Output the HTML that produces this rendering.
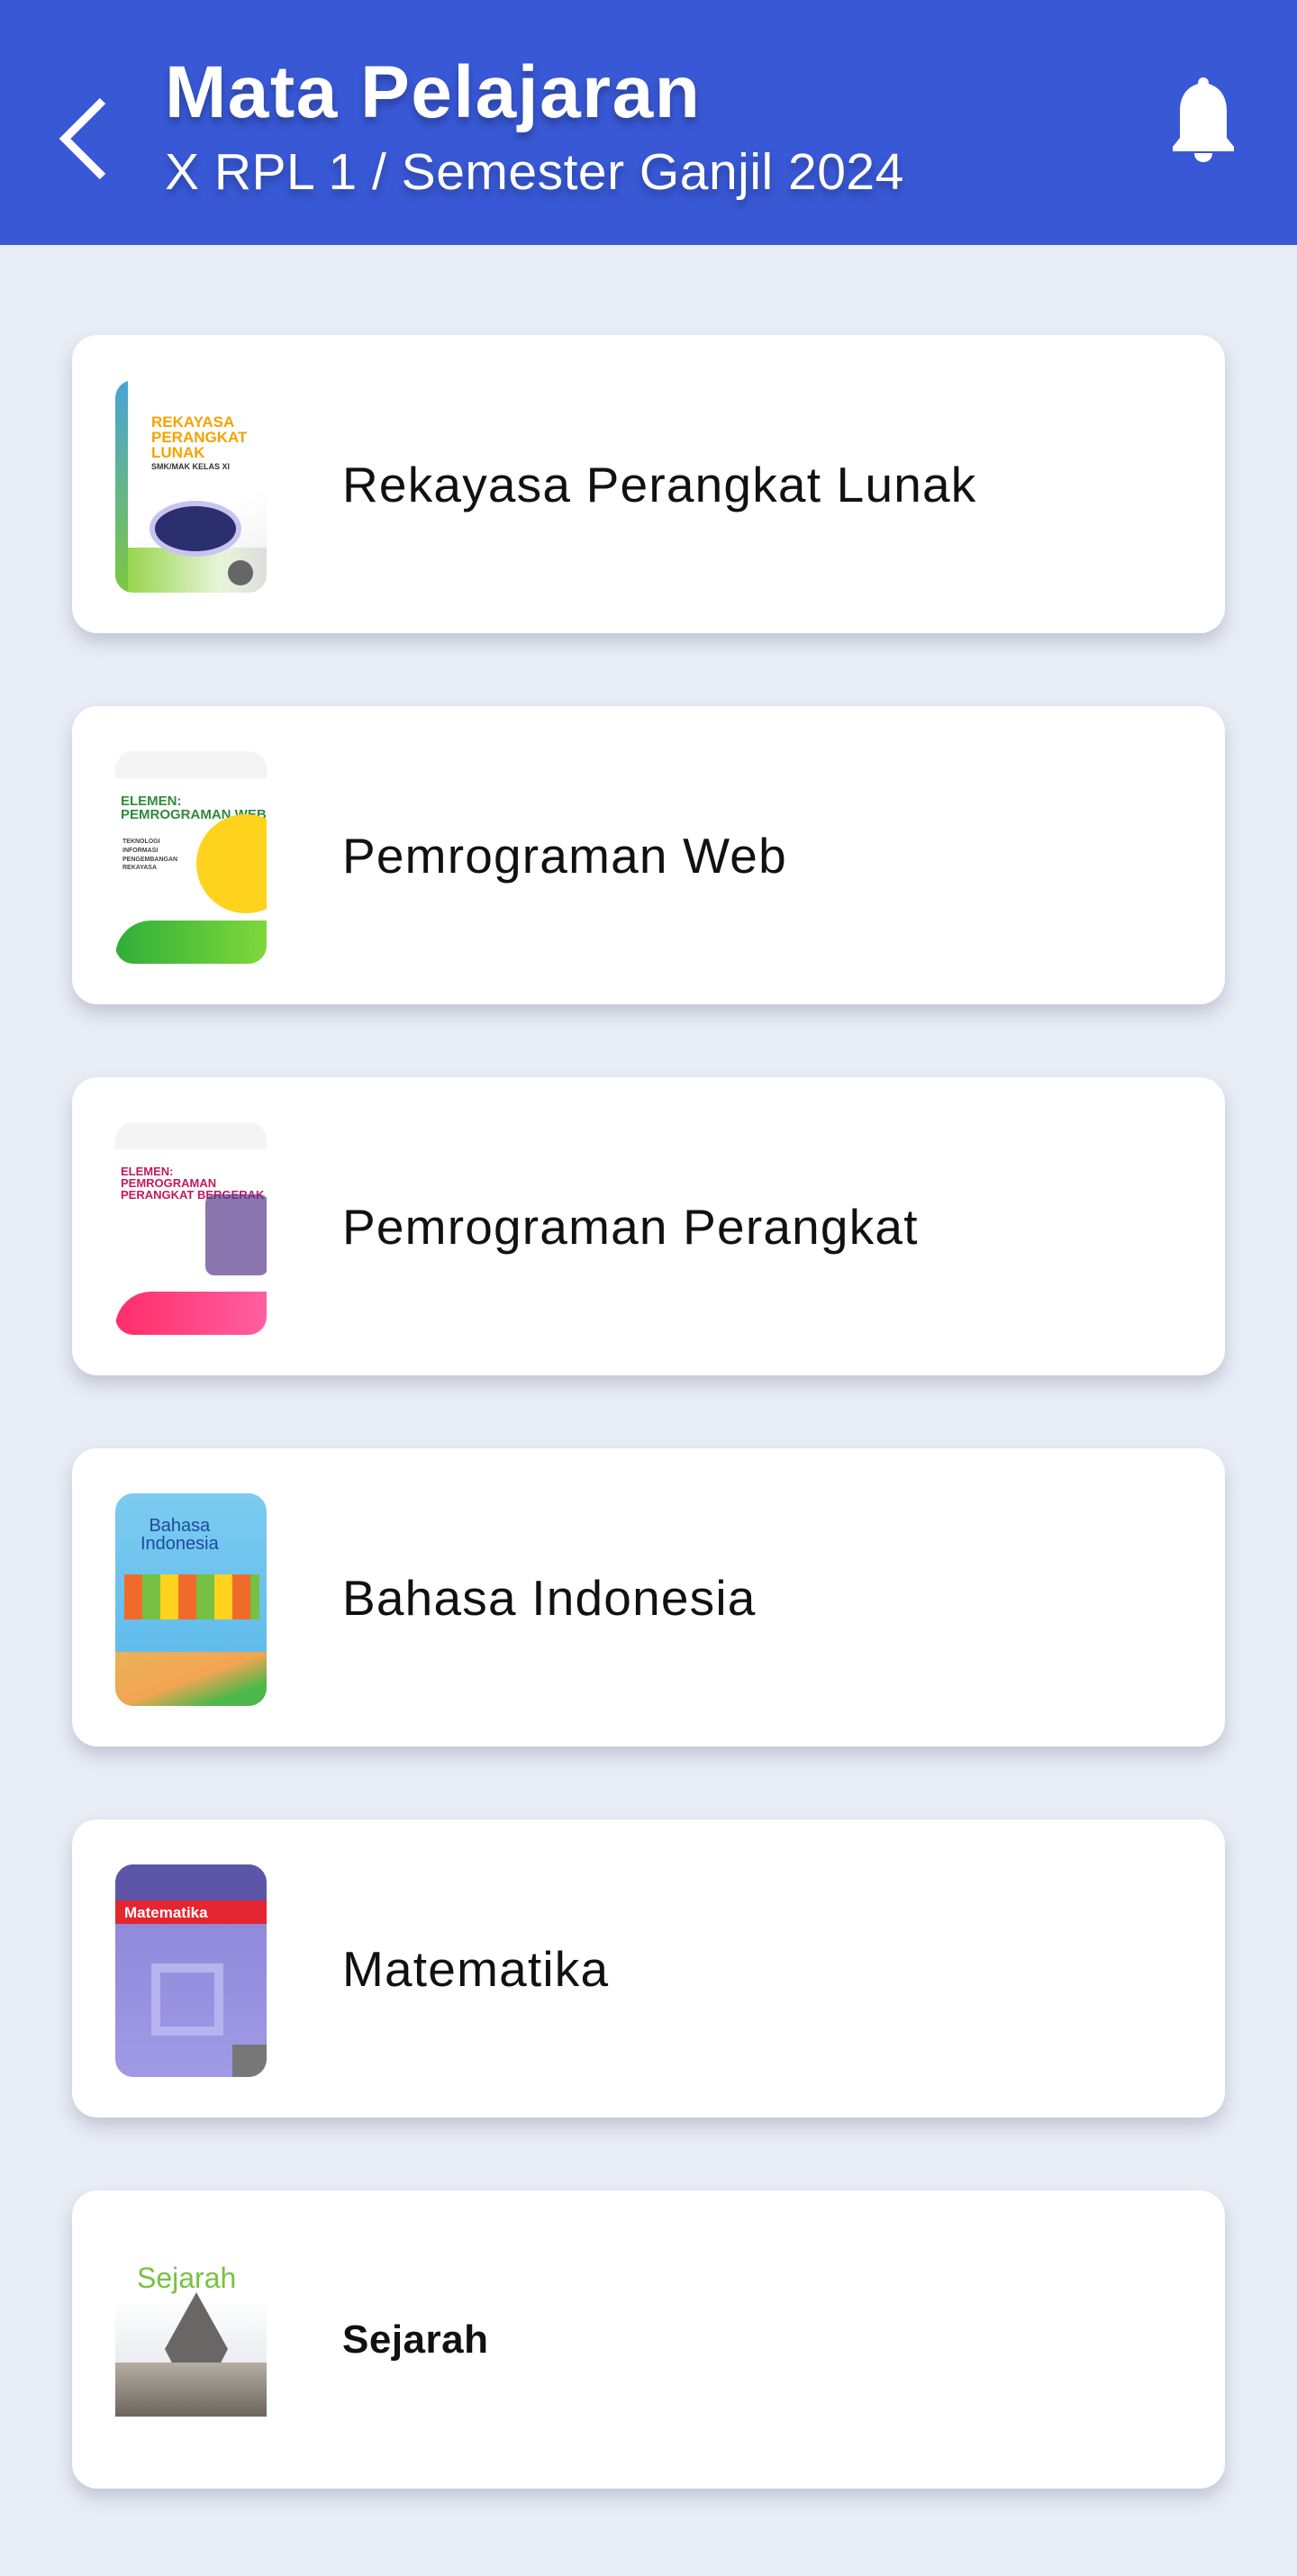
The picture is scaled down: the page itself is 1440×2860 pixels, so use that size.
<!DOCTYPE html>
<html><head><meta charset="utf-8"><style>
*{margin:0;padding:0;box-sizing:border-box}
body{width:1440px;height:2860px;background:#e8ecf5;font-family:"Liberation Sans",sans-serif;position:relative;overflow:hidden}
.hdr{position:absolute;left:0;top:0;width:1440px;height:272px;background:#3858d5}
.t1{position:absolute;left:183px;top:58px;color:#fff;font-weight:bold;font-size:82px;line-height:90px;text-shadow:0 6px 8px rgba(0,0,0,.25);letter-spacing:1.5px}
.t2{position:absolute;left:183px;top:160px;color:#fff;font-size:57px;line-height:62px;text-shadow:0 6px 8px rgba(0,0,0,.25);letter-spacing:0.5px}
.card{position:absolute;left:80px;width:1280px;height:331px;background:#fff;border-radius:28px;box-shadow:0 10px 18px rgba(60,70,100,.22)}
.cv{position:absolute;left:48px;top:50px;width:168px;height:236px;border-radius:20px;overflow:hidden}
.lb{position:absolute;left:300px;top:0;height:331px;display:flex;align-items:center;font-size:55px;color:#111;letter-spacing:1.2px}
.ct{position:absolute;font-weight:bold;line-height:1}
</style></head><body>
<div class="hdr">
<svg style="position:absolute;left:60px;top:108px" width="60" height="92" viewBox="0 0 60 92"><path d="M54 4 L12 46 L54 88" fill="none" stroke="#fff" stroke-width="9"/></svg>
<svg style="position:absolute;left:1294px;top:86px" width="84" height="94" viewBox="0 0 84 94"><path d="M42 0c4 0 6 3 6 7 13 4 20 15 20 30v30l8 10v5H8v-5l8-10V37c0-15 7-26 20-30 0-4 2-7 6-7z" fill="#fff"/><path d="M32 84h20c0 6-4 10-10 10s-10-4-10-10z" fill="#fff"/></svg>
<div class="t1">Mata Pelajaran</div>
<div class="t2">X RPL 1 / Semester Ganjil 2024</div>
</div>

<div class="card" style="top:372px">
<div class="cv" style="background:linear-gradient(160deg,#fff 60%,#eee);">
<div style="position:absolute;left:0;bottom:0;width:100%;height:50px;background:linear-gradient(90deg,#8cd13a,#e8f5d8 70%,#ddd)"></div>
<div style="position:absolute;left:0;top:0;width:14px;height:100%;background:linear-gradient(#4aa3d8,#7cc740)"></div>
<div class="ct" style="left:40px;top:38px;color:#f5a300;font-size:17px">REKAYASA<br>PERANGKAT<br>LUNAK</div>
<div class="ct" style="left:40px;top:92px;color:#333;font-size:9px">SMK/MAK KELAS XI</div>
<div style="position:absolute;left:44px;top:140px;width:90px;height:50px;border-radius:50%;background:#2b2f6e;box-shadow:0 0 0 6px #c9c3f0"></div>
<div style="position:absolute;left:125px;top:200px;width:28px;height:28px;border-radius:50%;background:#666"></div>
</div>
<div class="lb">Rekayasa Perangkat Lunak</div></div>

<div class="card" style="top:784px">
<div class="cv" style="background:#fff">
<div style="position:absolute;left:0;top:0;width:100%;height:30px;background:#f4f4f4"></div>
<div class="ct" style="left:6px;top:48px;color:#2f8a3a;font-size:15px">ELEMEN:<br>PEMROGRAMAN WEB</div>
<div style="position:absolute;left:90px;top:70px;width:110px;height:110px;border-radius:50%;background:#ffd21e"></div>
<div style="position:absolute;left:0;bottom:0;width:100%;height:48px;background:linear-gradient(90deg,#2fae3a,#7fd83a);border-radius:40px 0 0 0"></div>
<div class="ct" style="left:8px;top:96px;color:#444;font-size:7px;line-height:1.4">TEKNOLOGI<br>INFORMASI<br>PENGEMBANGAN<br>REKAYASA</div>
</div>
<div class="lb">Pemrograman Web</div></div>

<div class="card" style="top:1196px">
<div class="cv" style="background:#fff">
<div style="position:absolute;left:0;top:0;width:100%;height:30px;background:#f4f4f4"></div>
<div class="ct" style="left:6px;top:48px;color:#c31a5a;font-size:13px">ELEMEN:<br>PEMROGRAMAN<br>PERANGKAT BERGERAK</div>
<div style="position:absolute;left:100px;top:80px;width:70px;height:90px;background:#5a3b8c;border-radius:10px;opacity:.7"></div>
<div style="position:absolute;left:0;bottom:0;width:100%;height:48px;background:linear-gradient(90deg,#ff2d6a,#ff5fa0);border-radius:40px 0 0 0"></div>
</div>
<div class="lb">Pemrograman Perangkat</div></div>

<div class="card" style="top:1608px">
<div class="cv" style="background:linear-gradient(#7ccbf0,#58b8ea)">
<div class="ct" style="left:28px;top:26px;color:#1c4b9c;font-size:20px;font-weight:normal;text-align:center">Bahasa<br>Indonesia</div>
<div style="position:absolute;left:10px;top:90px;width:150px;height:50px;background:repeating-linear-gradient(90deg,#f06a2a 0 20px,#76c043 20px 40px,#ffd21e 40px 60px)"></div>
<div style="position:absolute;left:0;bottom:0;width:100%;height:60px;background:linear-gradient(160deg,#e9b25a,#f3a552 50%,#4bb84a 80%)"></div>
</div>
<div class="lb">Bahasa Indonesia</div></div>

<div class="card" style="top:2020px">
<div class="cv" style="background:linear-gradient(#8b83d6,#a09ae6)">
<div style="position:absolute;left:0;top:0;width:100%;height:40px;background:#5d55a8"></div>
<div style="position:absolute;left:0;top:40px;width:100%;height:26px;background:#e3262f"></div>
<div class="ct" style="left:10px;top:45px;color:#fff;font-size:17px">Matematika</div>
<div style="position:absolute;left:40px;top:110px;width:80px;height:80px;border:10px solid #b8b3ef"></div>
<div style="position:absolute;left:130px;top:200px;width:38px;height:36px;background:#777"></div>
</div>
<div class="lb">Matematika</div></div>

<div class="card" style="top:2432px">
<div class="cv" style="background:#fff;top:51px;height:224px;border-radius:0">
<div class="ct" style="left:24px;top:30px;color:#7ac142;font-size:32px;font-weight:normal">Sejarah</div>
<div style="position:absolute;left:0;top:70px;width:100%;height:130px;background:linear-gradient(#fff,#d8dce2)"></div>
<div style="position:absolute;left:55px;top:62px;width:70px;height:90px;background:#6b6666;clip-path:polygon(50% 0,100% 70%,80% 100%,20% 100%,0 70%)"></div>
<div style="position:absolute;left:0;top:140px;width:100%;height:60px;background:linear-gradient(#b5aea3,#6b655c)"></div>
</div>
<div class="lb" style="font-weight:bold;font-size:44px;letter-spacing:0.5px">Sejarah</div></div>
</body></html>
